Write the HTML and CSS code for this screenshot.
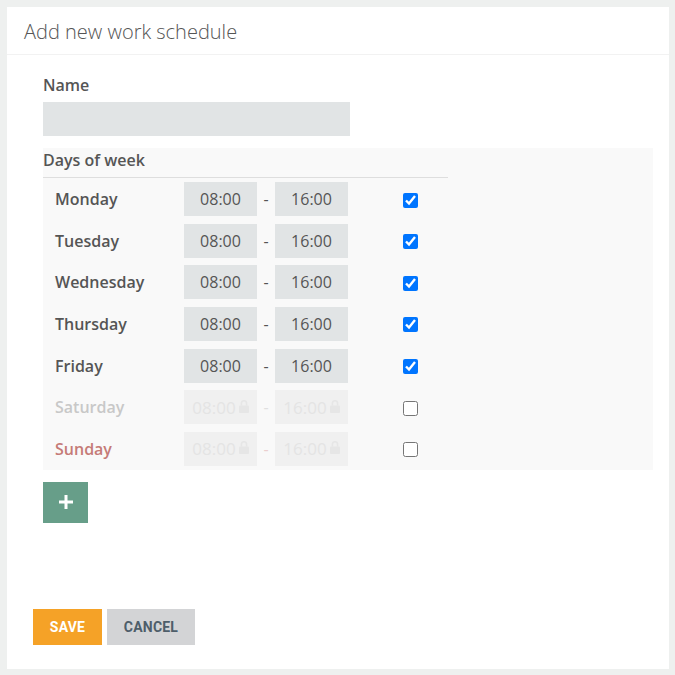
FILE: index.html
```html
<!DOCTYPE html>
<html lang="en">
<head>
    <meta charset="UTF-8">
    <meta name="viewport" content="width=device-width, initial-scale=1.0">
    <title>Add new work schedule</title>
    <link rel="stylesheet" href="styles.css">
</head>
<body>
<div class="card">
    <div class="card-header">Add new work schedule</div>

    <div class="card-body">
        <label class="field-label" for="name">Name</label>
        <input class="name-input" id="name" type="text">

        <div class="days">
            <div class="days-title">Days of week</div>
            <div class="days-list">
                <div class="day-row">
                    <span class="day-name">Monday</span>
                    <span class="time">08:00</span>
                    <span class="dash">-</span>
                    <span class="time">16:00</span>
                    <input class="day-check" type="checkbox" checked>
                </div>
                <div class="day-row">
                    <span class="day-name">Tuesday</span>
                    <span class="time">08:00</span>
                    <span class="dash">-</span>
                    <span class="time">16:00</span>
                    <input class="day-check" type="checkbox" checked>
                </div>
                <div class="day-row">
                    <span class="day-name">Wednesday</span>
                    <span class="time">08:00</span>
                    <span class="dash">-</span>
                    <span class="time">16:00</span>
                    <input class="day-check" type="checkbox" checked>
                </div>
                <div class="day-row">
                    <span class="day-name">Thursday</span>
                    <span class="time">08:00</span>
                    <span class="dash">-</span>
                    <span class="time">16:00</span>
                    <input class="day-check" type="checkbox" checked>
                </div>
                <div class="day-row">
                    <span class="day-name">Friday</span>
                    <span class="time">08:00</span>
                    <span class="dash">-</span>
                    <span class="time">16:00</span>
                    <input class="day-check" type="checkbox" checked>
                </div>
                <div class="day-row off">
                    <span class="day-name">Saturday</span>
                    <span class="time">08:00<svg class="lock" viewBox="0 0 10 14"><path d="M1.6 6.5V4.4a3.4 3.4 0 0 1 6.8 0v2.1H6.8V4.4a1.8 1.8 0 0 0-3.6 0v2.1z"/><rect x="0" y="6.5" width="10" height="7.5" rx="0.8"/></svg></span>
                    <span class="dash">-</span>
                    <span class="time">16:00<svg class="lock" viewBox="0 0 10 14"><path d="M1.6 6.5V4.4a3.4 3.4 0 0 1 6.8 0v2.1H6.8V4.4a1.8 1.8 0 0 0-3.6 0v2.1z"/><rect x="0" y="6.5" width="10" height="7.5" rx="0.8"/></svg></span>
                    <input class="day-check" type="checkbox">
                </div>
                <div class="day-row off weekend">
                    <span class="day-name">Sunday</span>
                    <span class="time">08:00<svg class="lock" viewBox="0 0 10 14"><path d="M1.6 6.5V4.4a3.4 3.4 0 0 1 6.8 0v2.1H6.8V4.4a1.8 1.8 0 0 0-3.6 0v2.1z"/><rect x="0" y="6.5" width="10" height="7.5" rx="0.8"/></svg></span>
                    <span class="dash">-</span>
                    <span class="time">16:00<svg class="lock" viewBox="0 0 10 14"><path d="M1.6 6.5V4.4a3.4 3.4 0 0 1 6.8 0v2.1H6.8V4.4a1.8 1.8 0 0 0-3.6 0v2.1z"/><rect x="0" y="6.5" width="10" height="7.5" rx="0.8"/></svg></span>
                    <input class="day-check" type="checkbox">
                </div>
            </div>
        </div>

        <button class="add-btn" type="button">
            <svg viewBox="0 0 16 16" width="16" height="16"><path d="M6.5 1h3v5.5H15v3H9.5V15h-3V9.5H1v-3h5.5z"/></svg>
        </button>
    </div>

    <div class="card-footer">
        <button class="btn btn-save" type="button">Save</button>
        <button class="btn btn-cancel" type="button">Cancel</button>
    </div>
</div>
</body>
</html>
```

FILE: styles.css
```css
body {
    margin: 0;
    padding: 7px 6px 6px 7px;
    background-color: #eef0ef;
    font-family: "Open Sans", Arial, sans-serif;
    color: #555;
}
.card {
    height: 662px;
    background-color: #fff;
    display: flex;
    flex-direction: column;
}
.card-header {
    height: 48px;
    padding-left: 17px;
    display: flex;
    align-items: center;
    font-size: 20px;
    font-weight: 300;
    color: #555;
    border-bottom: 1px solid #f2f2f2;
    box-sizing: border-box;
    padding-top: 2px;
}
.card-body {
    flex: 1;
    padding: 18px 16px 0 36px;
    display: flex;
    flex-direction: column;
    align-items: flex-start;
}
.field-label {
    font-size: 16px;
    font-weight: 600;
    line-height: 24px;
}
.name-input {
    margin-top: 5px;
    width: 307px;
    height: 34px;
    box-sizing: border-box;
    border: none;
    background-color: #e1e4e5;
}
.days {
    margin-top: 12px;
    align-self: stretch;
    background-color: #f9f9f9;
    padding-bottom: 4px;
}
.days-title {
    width: 405px;
    line-height: 24px;
    padding-bottom: 5px;
    font-size: 16px;
    font-weight: 600;
    border-bottom: 1px solid #dedede;
}
.days-list {
    padding-top: 4px;
    display: flex;
    flex-direction: column;
    gap: 7.67px;
}
.day-row {
    display: grid;
    grid-template-columns: 141px 73px 18px 73px 55px 15px;
    align-items: center;
    height: 34px;
}
.day-name {
    grid-column: 1;
    padding-left: 12px;
    font-size: 16px;
    font-weight: 600;
}
.time {
    height: 34px;
    background-color: #e1e4e5;
    display: flex;
    align-items: center;
    justify-content: center;
    font-size: 16px;
    color: #555;
}
.dash {
    text-align: center;
    font-size: 16px;
}
.day-check {
    grid-column: 6;
    margin: 2px 0 0;
    width: 15px;
    height: 15px;
}
.lock {
    width: 10px;
    height: 14px;
    margin-left: 3px;
    margin-top: -3px;
    fill: #e6e6e6;
}
.off .day-name {
    color: #c8c8c8;
}
.off .time {
    background-color: #f0f0f0;
    color: #e4e4e4;
    font-size: 17px;
}
.off .dash {
    color: #e0e0e0;
}
.weekend .day-name {
    color: #c57b77;
}
.weekend .dash {
    color: #ebcfcf;
}
.add-btn {
    margin-top: 12px;
    width: 45px;
    height: 41px;
    border: none;
    padding: 0;
    background-color: #679e89;
    display: flex;
    align-items: center;
    justify-content: center;
}
.add-btn svg {
    fill: #fff;
}
.card-footer {
    padding: 0 0 24px 26px;
    display: flex;
    gap: 5px;
}
.btn {
    height: 36px;
    border: none;
    font-family: "Roboto", Arial, sans-serif;
    font-size: 14px;
    font-weight: 700;
    text-transform: uppercase;
    letter-spacing: 0.2px;
}
.btn-save {
    width: 69px;
    background-color: #f5a227;
    color: #fff;
}
.btn-cancel {
    width: 88px;
    background-color: #d3d4d6;
    color: #4e5e6a;
}
```
